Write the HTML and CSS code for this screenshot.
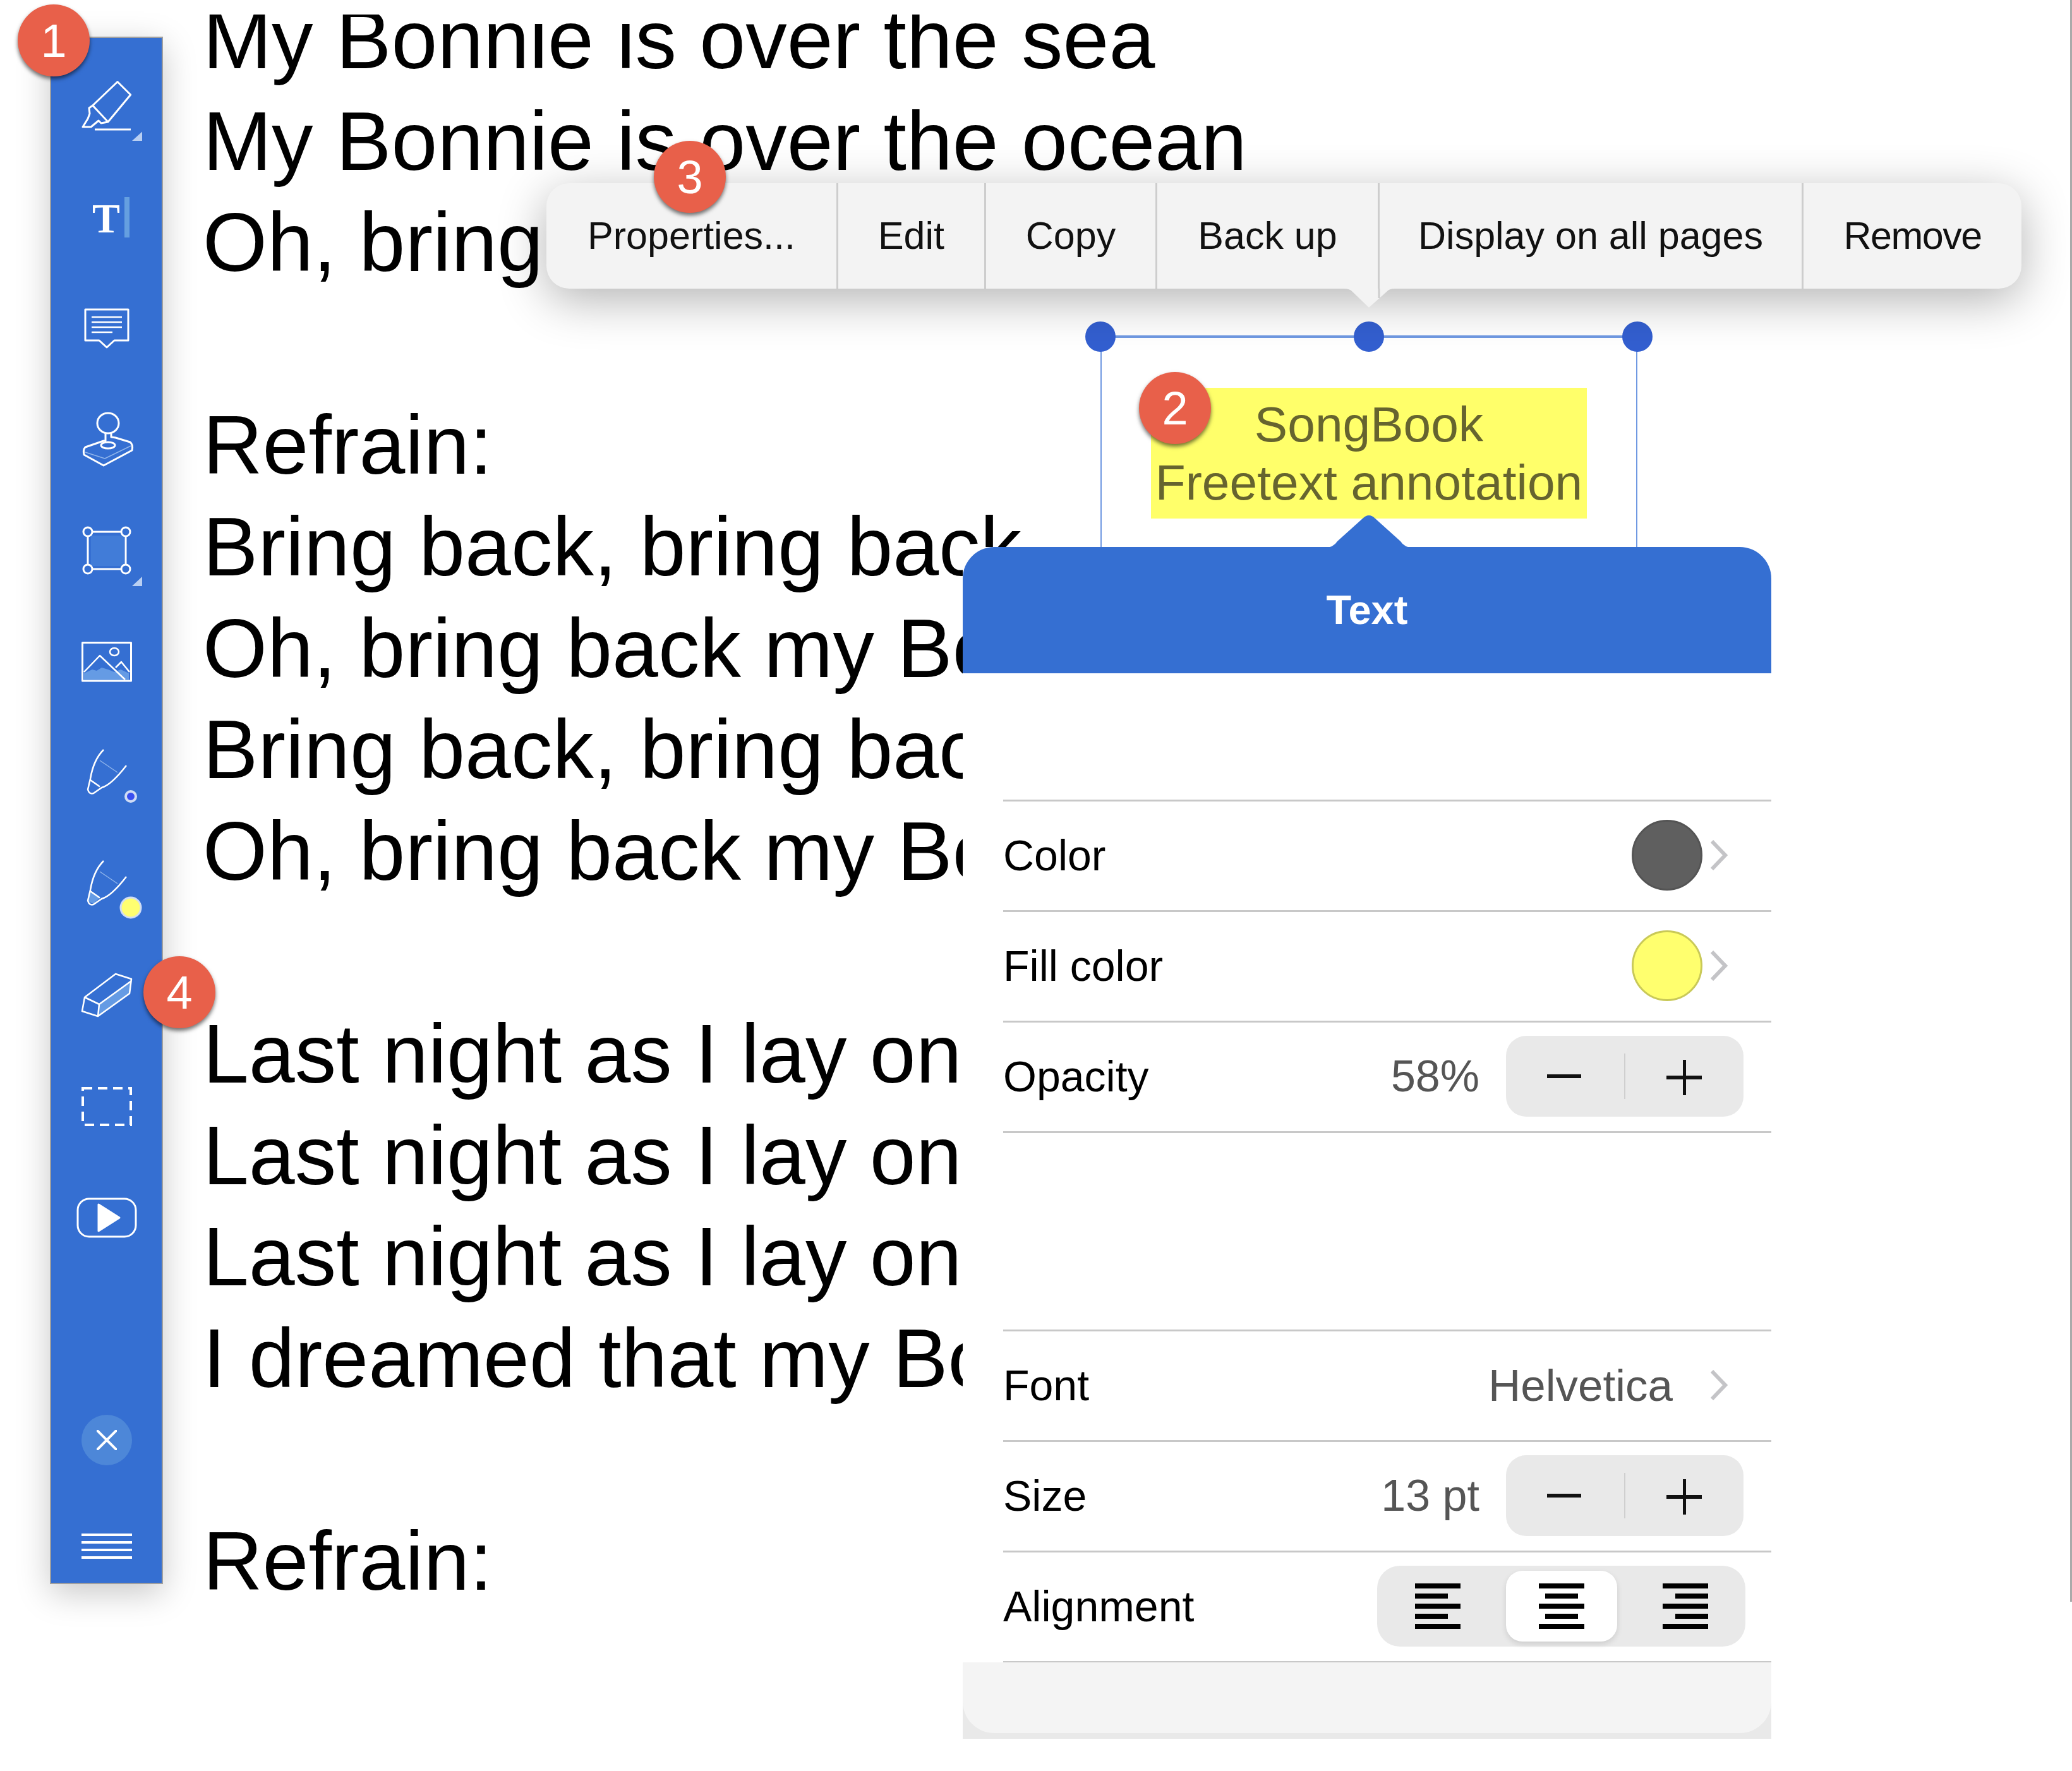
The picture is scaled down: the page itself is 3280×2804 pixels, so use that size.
FILE: index.html
```html
<!DOCTYPE html>
<html lang="en">
<head>
    <meta charset="UTF-8">
    <title>SongBook annotations</title>
    <link rel="stylesheet" href="styles.css">
</head>
<body>

<div class="page">
    <div class="toolbar">
        <div class="tool">
            <svg viewBox="108 108 120 120"><path class="ln" d="M185 129.5L205.7 150L170 193L145.7 167ZM145.7 167L140 171L141 180L138 188L130 201H143L155 191L159 195L170 193"/><path class="ln" d="M149 205H206"/><path class="corner" d="M208 223L224 208.500V223Z"/></svg>
        </div>
        <div class="tool">
            <svg viewBox="108 284 120 120"><text class="t-glyph" x="145" y="368">T</text><rect class="t-cursor" x="196" y="312" width="8" height="64"/></svg>
        </div>
        <div class="tool">
            <svg viewBox="108 460 120 120"><path class="ln" d="M134 490H202V539H180L168 550L156 539H134Z"/><path class="ln thin" d="M144 502H192M144 510H192M144 518H192M144 526H177"/></svg>
        </div>
        <div class="tool">
            <svg viewBox="108 636 120 120"><ellipse class="ln" cx="170" cy="670" rx="17" ry="16"/><path class="ln" d="M166 686V698L163 698L134 708Q130 712 132 720L163 737L208 713Q210 704 205 700L182 693L175 692V686"/><ellipse class="ln" cx="170" cy="705" rx="11" ry="5"/><path class="ln faint" d="M134 716L165 726L206 706"/></svg>
        </div>
        <div class="tool">
            <svg viewBox="108 812 120 120"><rect class="soft" x="143" y="848" width="52" height="48"/><path class="ln" d="M138 842H198V901H138Z"/><circle class="knob" cx="138" cy="842" r="7"/><circle class="knob" cx="198" cy="842" r="7"/><circle class="knob" cx="138" cy="901" r="7"/><circle class="knob" cx="198" cy="901" r="7"/><path class="corner" d="M208 928L224 913V928Z"/></svg>
        </div>
        <div class="tool">
            <svg viewBox="108 988 120 120"><path class="soft-lt" d="M132 1076V1066L145 1060L152 1062L160 1057L170 1060L180 1064L190 1060L203 1066V1076Z"/><rect class="ln" x="129.500" y="1017.500" width="77" height="60.500"/><ellipse class="ln thin" cx="180" cy="1032" rx="7" ry="6"/><path class="ln thin" d="M132 1064L157 1038L197 1076M182 1057L191 1048L204 1064"/></svg>
        </div>
        <div class="tool">
            <svg viewBox="108 1164 120 120"><path class="ln thin" d="M163 1187Q147 1203 142 1233L138 1250Q140 1258 147 1256L160 1247Q175 1243 199 1212M142 1235L157 1245.500"/><path class="ln faint" d="M157 1204L185 1223"/><circle class="dot-blue" cx="206" cy="1261" r="8"/></svg>
        </div>
        <div class="tool">
            <svg viewBox="108 1340 120 120"><path class="soft-lt" d="M142 1411L157 1421L147 1431L138 1427Z"/><path class="ln thin" d="M163 1363Q147 1379 142 1409L138 1426Q140 1434 147 1432L160 1423Q175 1419 199 1388M142 1411L157 1421.500"/><path class="ln faint" d="M157 1380L185 1399"/><circle class="dot-yellow" cx="206" cy="1437" r="16"/></svg>
        </div>
        <div class="tool">
            <svg viewBox="108 1516 120 120"><path class="soft-lt" d="M156 1590L207 1553L204 1573L154 1609Z"/><path class="ln thin" d="M133 1579L182 1542L207 1550L204 1573L154 1609L129 1601ZM133 1579L156 1590L207 1553M156 1590L154 1609"/></svg>
        </div>
        <div class="tool">
            <svg viewBox="108 1692 120 120"><rect class="dashed" x="130" y="1723" width="76" height="58"/></svg>
        </div>
        <div class="tool">
            <svg viewBox="108 1868 120 120"><rect class="ln" x="122" y="1898" width="92" height="60" rx="18"/><path class="play" d="M155 1907L188 1928L155 1949Z"/></svg>
        </div>
        <div class="toolbar-bottom">
            <div class="close-btn">
                <svg viewBox="0 0 32 32"><path d="M1 1L31 31M31 1L1 31"/></svg>
            </div>
            <div class="burger"><span></span><span></span><span></span><span></span></div>
        </div>
    </div>

    <div class="doc">
        <div class="lyrics">
            My Bonnie is over the sea<br>
            My Bonnie is over the ocean<br>
            Oh, bring back my Bonnie to me<br>
            <br>
            Refrain:<br>
            Bring back, bring back,<br>
            Oh, bring back my Bonnie to me<br>
            Bring back, bring back<br>
            Oh, bring back my Bonnie to me<br>
            <br>
            Last night as I lay on my pillow<br>
            Last night as I lay on my bed<br>
            Last night as I lay on my pillow<br>
            I dreamed that my Bonnie was dead<br>
            <br>
            Refrain:
        </div>
    </div>
</div>

<div class="selection">
    <span class="handle handle-l"></span>
    <span class="handle handle-c"></span>
    <span class="handle handle-r"></span>
    <div class="note">SongBook<br>Freetext annotation</div>
</div>

<div class="menu">
    <div class="menu-item w-props">Properties...</div>
    <div class="menu-item w-edit">Edit</div>
    <div class="menu-item w-copy">Copy</div>
    <div class="menu-item w-back">Back up</div>
    <div class="menu-item w-display">Display on all pages</div>
    <div class="menu-item w-remove">Remove</div>
    <svg class="menu-arrow" viewBox="0 0 81 30"><path d="M0 0Q10 0 14 5L39 29Q40 30 41 29L68 5Q72 0 81 0Z"/><path class="menu-arrow-sep" d="M56 0V15"/></svg>
</div>

<div class="panel">
    <svg class="panel-arrow" viewBox="0 0 140 52"><path d="M0 52Q14 52 20 42L60 6Q70 -4 80 6L120 42Q126 52 140 52Z"/></svg>
    <div class="panel-head">Text</div>
    <div class="rows rows-top">
        <div class="row">
            <span>Color</span>
            <div class="row-end"><span class="swatch swatch-grey"></span><svg class="chev" viewBox="0 0 28 48"><path d="M3 2L24 24L3 46"/></svg></div>
        </div>
        <div class="row">
            <span>Fill color</span>
            <div class="row-end"><span class="swatch swatch-yellow"></span><svg class="chev" viewBox="0 0 28 48"><path d="M3 2L24 24L3 46"/></svg></div>
        </div>
        <div class="row">
            <span>Opacity</span>
            <div class="row-end"><span class="value">58%</span><div class="stepper"><span class="step-minus"></span><span class="step-sep"></span><span class="step-plus"></span></div></div>
        </div>
    </div>
    <div class="rows rows-bottom">
        <div class="row">
            <span>Font</span>
            <div class="row-end"><span class="value value-font">Helvetica</span><svg class="chev" viewBox="0 0 28 48"><path d="M3 2L24 24L3 46"/></svg></div>
        </div>
        <div class="row">
            <span>Size</span>
            <div class="row-end"><span class="value">13 pt</span><div class="stepper"><span class="step-minus"></span><span class="step-sep"></span><span class="step-plus"></span></div></div>
        </div>
        <div class="row">
            <span>Alignment</span>
            <div class="row-end">
                <div class="align-group">
                    <div class="align-btn align-left"><i></i><i></i><i></i><i></i><i></i></div>
                    <div class="align-btn align-center active"><i></i><i></i><i></i><i></i><i></i></div>
                    <div class="align-btn align-right"><i></i><i></i><i></i><i></i><i></i></div>
                </div>
            </div>
        </div>
    </div>
    <div class="panel-foot"><div class="panel-foot-in"></div></div>
</div>

<div class="badge badge-1">1</div>
<div class="badge badge-2">2</div>
<div class="badge badge-3">3</div>
<div class="badge badge-4">4</div>

</body>
</html>
```

FILE: styles.css
```css
html, body {
    margin: 0;
    padding: 0;
}
body {
    position: relative;
    width: 3280px;
    height: 2804px;
    overflow: hidden;
    background-color: #fff;
    color: #000;
    font-family: "Liberation Sans", Arial, sans-serif;
}
.page {
    display: flex;
    align-items: flex-start;
    height: 2536px;
    padding-left: 79px;
    border-right: 3px solid #aaa;
    box-sizing: border-box;
}

/* left toolbar */
.toolbar {
    display: flex;
    flex-direction: column;
    flex: none;
    box-sizing: border-box;
    width: 179px;
    height: 2450px;
    margin-top: 58px;
    padding-top: 20px;
    background-color: #356fd2;
    border: 2px solid #a0a0a0;
    box-shadow: 0 14px 50px rgba(0, 0, 0, 0.22);
}
.tool {
    display: flex;
    justify-content: center;
    align-items: center;
    flex: none;
    height: 176px;
}
.tool svg {
    width: 120px;
    height: 120px;
    overflow: visible;
}
.ln {
    fill: none;
    stroke: #fff;
    stroke-width: 3;
    stroke-linejoin: round;
}
.thin {
    stroke-width: 2.5;
}
.faint {
    stroke-width: 1.5;
    stroke: #8fb4ea;
}
.corner {
    fill: #b9cff2;
}
.soft {
    fill: #417cd8;
}
.soft-lt {
    fill: #659be4;
}
.knob {
    fill: #356fd2;
    stroke: #fff;
    stroke-width: 3;
}
.t-glyph {
    font-family: "Liberation Serif", serif;
    font-weight: bold;
    font-size: 66px;
    fill: #fff;
}
.t-cursor {
    fill: #659fe0;
}
.dashed {
    fill: none;
    stroke: #fff;
    stroke-width: 4;
    stroke-dasharray: 15 9;
}
.play {
    fill: #fff;
    stroke: #fff;
    stroke-width: 3;
    stroke-linejoin: round;
}
.dot-blue {
    fill: #3a4ff0;
    stroke: #cfdcf5;
    stroke-width: 4;
}
.dot-yellow {
    fill: #ffff70;
    stroke: #cfdcf5;
    stroke-width: 3;
}
.toolbar-bottom {
    display: flex;
    flex-direction: column;
    align-items: center;
    margin-top: auto;
    padding-bottom: 38px;
}
.close-btn {
    display: flex;
    justify-content: center;
    align-items: center;
    width: 80px;
    height: 80px;
    border-radius: 50%;
    background-color: #4d87d8;
}
.close-btn svg {
    width: 32px;
    height: 32px;
    stroke: #fff;
    stroke-width: 4;
    stroke-linecap: round;
}
.burger {
    display: flex;
    flex-direction: column;
    gap: 8px;
    margin-top: 108px;
}
.burger span {
    display: block;
    width: 80px;
    height: 4px;
    background-color: #fff;
}

/* page text */
.doc {
    flex: 1;
    height: 2513px;
    margin-top: 23px;
    margin-left: 63px;
    overflow: hidden;
}
.lyrics {
    font-size: 131px;
    line-height: 160.6px;
    margin-top: -40px;
    white-space: nowrap;
}

/* selection around the annotation */
.selection {
    position: absolute;
    left: 1742px;
    top: 531px;
    box-sizing: border-box;
    width: 850px;
    height: 342px;
    border: 2px solid #7099e2;
    border-top-width: 4px;
    border-bottom: none;
    background-color: #fff;
}
.handle {
    position: absolute;
    top: -26px;
    width: 48px;
    height: 48px;
    border-radius: 50%;
    background-color: #335fd0;
}
.handle-l { left: -26px; }
.handle-c { left: 399px; }
.handle-r { right: -26px; }
.note {
    position: absolute;
    left: 78px;
    top: 79px;
    width: 690px;
    height: 207px;
    padding-top: 12px;
    box-sizing: border-box;
    background-color: #ffff6a;
    color: #66642f;
    font-size: 78.5px;
    line-height: 92px;
    text-align: center;
}

/* context menu */
.menu {
    position: absolute;
    left: 865px;
    top: 290px;
    display: flex;
    width: 2335px;
    height: 167px;
    background-color: #f3f3f3;
    border-radius: 36px;
    box-shadow: 0 18px 76px rgba(0, 0, 0, 0.3);
    font-size: 61px;
    color: #111;
}
.menu-item {
    display: flex;
    justify-content: center;
    align-items: center;
    box-sizing: border-box;
    padding-bottom: 1px;
    border-right: 3px solid #cdcdcd;
}
.menu-item:nth-child(6) {
    border-right: none;
}
.w-props { width: 462px; }
.w-edit { width: 234px; }
.w-copy { width: 271px; }
.w-back { width: 352px; }
.w-display { width: 671px; }
.w-remove {
    width: 345px;
    letter-spacing: -1.5px;
}
.menu-arrow {
    position: absolute;
    left: 1262px;
    top: 167px;
    width: 81px;
    height: 30px;
    fill: #f3f3f3;
}
.menu-arrow-sep {
    fill: none;
    stroke: #cdcdcd;
    stroke-width: 3;
}

/* properties panel */
.panel {
    position: absolute;
    left: 1524px;
    top: 866px;
    width: 1280px;
    height: 1887px;
    background-color: #fff;
    font-size: 68px;
    display: flex;
    flex-direction: column;
}
.panel-arrow {
    position: absolute;
    left: 573px;
    top: -51px;
    width: 140px;
    height: 52px;
    fill: #356fd2;
}
.panel-head {
    display: flex;
    flex: none;
    justify-content: center;
    align-items: center;
    box-sizing: border-box;
    height: 200px;
    padding-bottom: 2px;
    background-color: #356fd2;
    border-radius: 50px 50px 0 0;
    color: #fff;
    font-size: 65px;
    font-weight: bold;
}
.rows {
    flex: none;
    margin-left: 64px;
    border-top: 3px solid #c8c8c8;
}
.rows-top {
    margin-top: 200px;
}
.rows-bottom {
    margin-top: 311px;
}
.row {
    display: flex;
    justify-content: space-between;
    align-items: center;
    box-sizing: border-box;
    height: 175px;
    padding-bottom: 2px;
    border-bottom: 3px solid #c8c8c8;
}
.row-end {
    display: flex;
    align-items: center;
}
.swatch {
    display: block;
    box-sizing: border-box;
    width: 112px;
    height: 112px;
    border-radius: 50%;
    margin-right: 12px;
}
.swatch-grey {
    background-color: #5f5f5f;
    border: 3px solid #545454;
}
.swatch-yellow {
    background-color: #ffff6e;
    border: 3px solid #c9c958;
}
.chev {
    flex: none;
    width: 28px;
    height: 48px;
    margin-right: 69px;
    fill: none;
    stroke: #c4c4c7;
    stroke-width: 6;
}
.value {
    font-size: 70px;
    color: #555;
    margin-right: 42px;
}
.value-font {
    font-size: 71px;
    margin-right: 59px;
}
.stepper {
    display: flex;
    align-items: center;
    position: relative;
    box-sizing: border-box;
    width: 376px;
    height: 128px;
    margin-right: 44px;
    background-color: #e9e9e9;
    border-radius: 32px;
}
.step-minus {
    position: absolute;
    left: 65px;
    top: 61px;
    width: 54px;
    height: 6px;
    background-color: #111;
}
.step-sep {
    position: absolute;
    left: 187px;
    top: 28px;
    width: 2px;
    height: 72px;
    background-color: #cfcfcf;
}
.step-plus {
    position: absolute;
    left: 254px;
    top: 38px;
    width: 56px;
    height: 56px;
    background:
        linear-gradient(#111, #111) center / 56px 6px no-repeat,
        linear-gradient(#111, #111) center / 5px 56px no-repeat;
}
.align-group {
    display: flex;
    justify-content: space-between;
    align-items: center;
    box-sizing: border-box;
    width: 583px;
    height: 128px;
    margin-right: 41px;
    padding-left: 60px;
    padding-right: 59px;
    background-color: #e9e9e9;
    border-radius: 36px;
}
.align-btn {
    display: flex;
    flex-direction: column;
    gap: 8px;
    box-sizing: border-box;
    width: 72px;
}
.align-btn i {
    display: block;
    width: 72px;
    height: 8px;
    background-color: #000;
}
.align-btn i:nth-child(even) {
    width: 52px;
}
.align-center {
    align-items: center;
}
.align-right {
    align-items: flex-end;
}
.align-btn.active {
    justify-content: center;
    width: 176px;
    height: 112px;
    background-color: #fff;
    border-radius: 26px;
    box-shadow: 0 4px 10px rgba(0, 0, 0, 0.12);
}
.panel-foot {
    flex: 1;
    margin-top: -1px;
    background-color: #e9e9e9;
}
.panel-foot-in {
    height: 112px;
    background-color: #f4f4f4;
    border-radius: 0 0 50px 50px;
}

/* numbered callouts */
.badge {
    position: absolute;
    display: flex;
    justify-content: center;
    align-items: center;
    width: 114px;
    height: 114px;
    border-radius: 50%;
    background-color: #e8604a;
    box-shadow: 0 4px 6px rgba(0, 0, 0, 0.55);
    color: #fff;
    font-size: 74px;
}
.badge-1 { left: 28px; top: 7px; }
.badge-2 { left: 1803px; top: 589px; }
.badge-3 { left: 1035px; top: 223px; }
.badge-4 { left: 227px; top: 1514px; }
```
